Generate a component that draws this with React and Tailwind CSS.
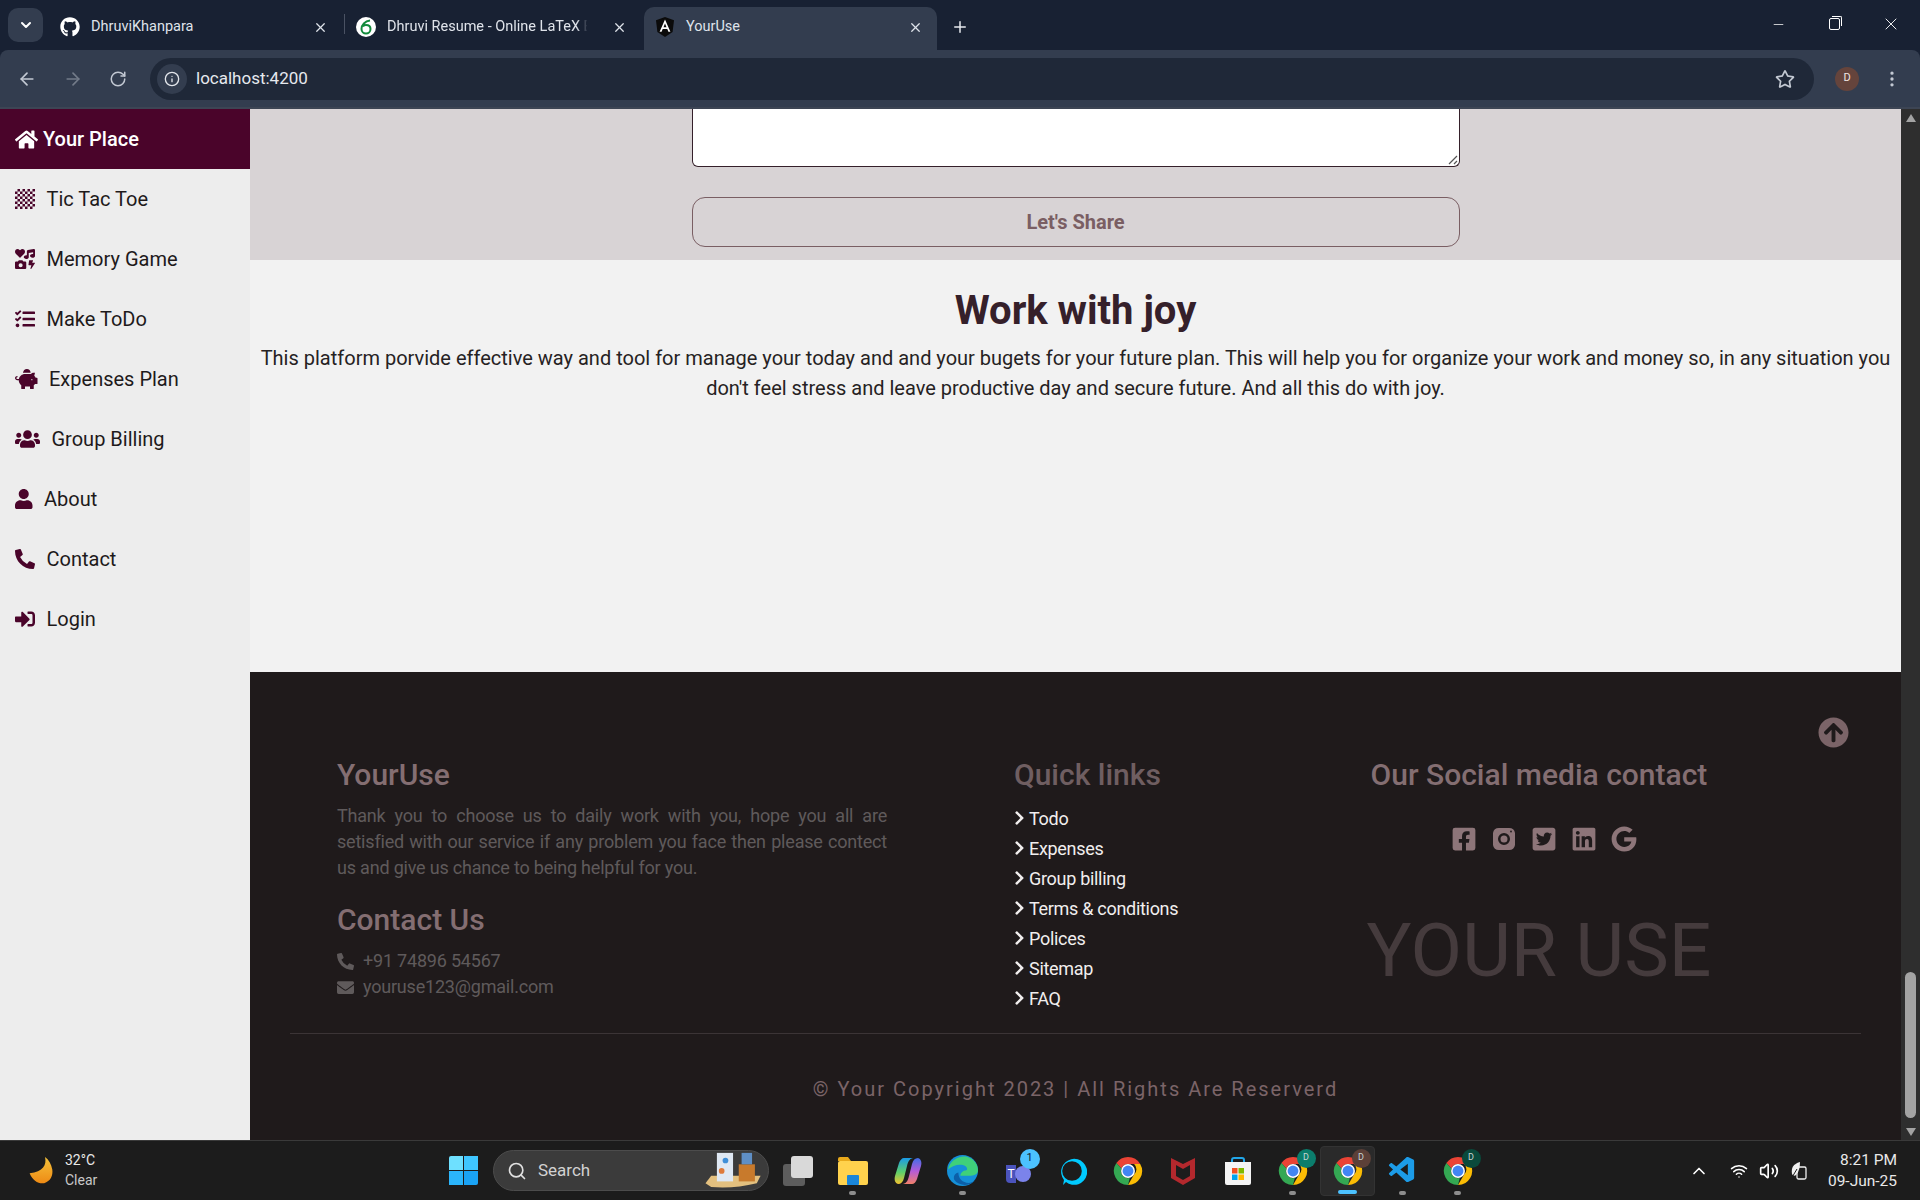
import React from 'react';
import {
  FaHome, FaChessBoard, FaIcons, FaTasks, FaPiggyBank, FaUsers, FaUser, FaPhoneAlt, FaSignInAlt,
  FaChevronRight, FaEnvelope, FaArrowCircleUp, FaFacebookSquare, FaTwitterSquare,
  FaLinkedin, FaGoogle, FaGithub, FaRegStar,
} from 'react-icons/fa';
import { VscVscode } from 'react-icons/vsc';
import { ArrowLeft, ArrowRight, RotateCw, Info, ChevronDown, X, Plus, Minus, EllipsisVertical, Search, ChevronUp, Wifi, Volume2 } from 'lucide-react';

const navItems = [
  { label: 'Tic Tac Toe', icon: FaChessBoard, size: 'w-[20px] h-[20px]' },
  { label: 'Memory Game', icon: FaIcons, size: 'w-[20px] h-[20px]' },
  { label: 'Make ToDo', icon: FaTasks, size: 'w-[20px] h-[20px]' },
  { label: 'Expenses Plan', icon: FaPiggyBank, size: 'w-[22.5px] h-[20px]' },
  { label: 'Group Billing', icon: FaUsers, size: 'w-[25px] h-[20px]' },
  { label: 'About', icon: FaUser, size: 'w-[17.5px] h-[20px]' },
  { label: 'Contact', icon: FaPhoneAlt, size: 'w-[20px] h-[20px]' },
  { label: 'Login', icon: FaSignInAlt, size: 'w-[20px] h-[20px]' },
];

const quickLinks = ['Todo', 'Expenses', 'Group billing', 'Terms & conditions', 'Polices', 'Sitemap', 'FAQ'];

const ChromeLogo = ({ badge, badgeClass }) => (
  <div className="relative w-[30px] h-[30px]">
    <svg viewBox="0 0 32 32" className="w-[30px] h-[30px]">
      <path d="M16 1a15 15 0 0 1 13 7.5H16a7.5 7.5 0 0 0-7 4.8L3.6 7.5A15 15 0 0 1 16 1z" fill="#ea4335" />
      <path d="M29 8.5A15 15 0 0 1 16 31l6.5-11.3a7.5 7.5 0 0 0 0-11.2z" fill="#fbbc04" />
      <path d="M3.6 7.5 9 13.3a7.5 7.5 0 0 0 9 10L16 31A15 15 0 0 1 3.6 7.5z" fill="#34a853" />
      <circle cx="16" cy="16" r="7.4" fill="#fff" />
      <circle cx="16" cy="16" r="5.8" fill="#4285f4" />
    </svg>
    {badge && (
      <div className={`absolute -top-[7px] -right-[8px] w-[19px] h-[19px] rounded-full flex items-center justify-center text-[9px] text-[#c9d5d2] ${badgeClass}`}>
        {badge}
      </div>
    )}
  </div>
);

const TaskbarSlot = ({ children, dot, active }) => (
  <div className={`relative w-[55px] h-[50px] flex items-center justify-center ${active ? 'bg-[#2a2a2a] rounded-[4px] border border-[#333333]' : ''}`}>
    {children}
    {dot && <div className="absolute bottom-[1px] w-[7px] h-[4px] rounded-full bg-[#8e8e8e]" />}
    {active && <div className="absolute bottom-[1px] w-[19px] h-[4px] rounded-full bg-[#4cc2ff]" />}
  </div>
);

const Tab = ({ icon, title, active, width, separator, fade }) => (
  <div className={`relative flex items-center h-[43px] pl-[11px] pb-[3px] ${width} ${active ? 'bg-[#333d4f] rounded-t-[10px] pr-[14px]' : 'pr-[17px]'}`}>
    <div className="w-[20px] h-[20px] flex items-center justify-center shrink-0">{icon}</div>
    <span className={`ml-[11px] text-[14.5px] text-[#dfe3ea] whitespace-nowrap flex-1 ${fade ? '[mask-image:linear-gradient(to_right,black_87%,transparent_92%)]' : ''}`}>{title}</span>
    <X size={15} className="text-[#dfe3ea] shrink-0 ml-[7px]" />
    {separator && <div className="absolute right-0 top-[7px] h-[20px] w-px bg-[#4a5263]" />}
  </div>
);

const BrowserChrome = () => (
  <div className="h-[109px] shrink-0 bg-[#182133] flex flex-col font-[Roboto,sans-serif]">
    <div className="h-[50px] flex items-end pl-[8px]">
      <div className="w-[35px] h-[34px] mb-[8px] rounded-[10px] bg-[#333d4f] flex items-center justify-center mr-[6px]">
        <ChevronDown size={16} className="text-white" strokeWidth={3} />
      </div>
      <Tab separator width="w-[296px]" title="DhruviKhanpara" icon={<FaGithub size={20} className="text-white" />} />
      <Tab
        fade
        width="w-[299px]"
        title="Dhruvi Resume - Online LaTeX E"
        icon={
          <svg viewBox="0 0 20 20" className="w-[20px] h-[20px]">
            <circle cx="10" cy="10" r="10" fill="#fff" />
            <path d="M14 3.5C9 4 5.500 8 5.500 12a4.500 4.500 0 0 0 9 0c0-2.500-2-4-4.500-4-1.500 0-2.500.5-3 1.500" fill="none" stroke="#138a3c" strokeWidth="2" />
          </svg>
        }
      />
      <Tab
        active
        width="w-[293px]"
        title="YourUse"
        icon={
          <svg viewBox="0 0 20 20" className="w-[20px] h-[20px]">
            <path d="M10 0 1 3.200 2.400 15 10 20l7.600-5L19 3.200z" fill="#0b0b0b" />
            <path d="M10 2.500 4.600 14.700h2l1.100-2.700h4.600l1.100 2.700h2zM8.500 10.200 10 6.500l1.500 3.700z" fill="#fff" />
          </svg>
        }
      />
      <div className="w-[46px] h-[43px] pb-[3px] flex items-center justify-center">
        <Plus size={18} className="text-[#e6e9ee]" />
      </div>
      <div className="flex-1" />
      <div className="h-[50px] flex items-center pb-[2px]">
        <div className="w-[56px] flex justify-center"><Minus size={15} className="text-white" strokeWidth={1.2} /></div>
        <div className="w-[56px] flex justify-center">
          <div className="relative w-[11px] h-[12px] border border-white rounded-[2px]">
            <div className="absolute -top-[3px] -right-[3px] w-[10px] h-[10px] border-t border-r border-white rounded-tr-[2px]" />
          </div>
        </div>
        <div className="w-[58px] flex justify-center"><X size={20} className="text-white" strokeWidth={1.1} /></div>
      </div>
    </div>
    <div className="h-[59px] bg-[#333d4f] rounded-t-[8px] border-b-2 border-[#3d4554] flex items-center">
      <div className="w-[150px] flex items-center pl-[17px] gap-[26px]">
        <ArrowLeft size={20} className="text-[#c3c9d3]" />
        <ArrowRight size={20} className="text-[#737b89]" />
        <RotateCw size={18} className="text-[#c3c9d3]" />
      </div>
      <div className="w-[1664px] h-[42px] rounded-full bg-[#1f2838] flex items-center pl-[7px] pr-[19px]">
        <div className="w-[30px] h-[30px] rounded-full bg-[#333d4f] flex items-center justify-center">
          <Info size={16} className="text-[#e3e6eb]" />
        </div>
        <span className="ml-[9px] text-[17px] text-[#e6e9ee] flex-1">localhost:4200</span>
        <FaRegStar size={20} className="text-[#c3c9d3]" />
      </div>
      <div className="flex items-center ml-[21px]">
        <div className="w-[24px] h-[24px] rounded-full bg-[#65443c] flex items-center justify-center text-[11px] text-[#f1e6e3]">D</div>
        <EllipsisVertical size={20} className="ml-[23px] text-[#c3c9d3]" />
      </div>
    </div>
  </div>
);

const Sidebar = () => (
  <aside className="w-[250px] shrink-0 bg-[#ededed] font-[Roboto,sans-serif]">
    <div className="h-[60px] bg-[#4a042a] flex items-center pl-[15px] gap-[5px] text-white text-[20px] font-medium">
      <FaHome size={23} />
      <span>Your Place</span>
    </div>
    {navItems.map((item) => (
      <div key={item.label} className="h-[60px] flex items-center pl-[15px] gap-[11.5px] text-[20px] text-[#1e1a1b]">
        <item.icon className={`${item.size} text-[#4a042a]`} />
        <span>{item.label}</span>
      </div>
    ))}
  </aside>
);

const Footer = () => (
  <footer className="relative flex-1 bg-[#1f1a1b] px-[40px] font-[Roboto,sans-serif]">
    <FaArrowCircleUp size={31} className="absolute top-[45px] right-[52px] text-[#7b6468]" />
    <div className="h-[362px] flex pl-[47px] pt-[83px] border-b border-[#3b3436]">
      <div className="w-[677px]">
        <h3 className="text-[30px] leading-[40px] font-medium text-[#846e72]">YourUse</h3>
        <p className="w-[550px] mt-[8px] text-[18px] leading-[26px] tracking-[-0.2px] text-[#5f5a5b] text-justify">
          Thank you to choose us to daily work with you, hope you all are setisfied with our service if any problem you face then please contect us and give us chance to being helpful for you.
        </p>
        <h3 className="mt-[19px] text-[30px] leading-[40px] font-medium text-[#846e72]">Contact Us</h3>
        <div className="mt-[8px] flex flex-col text-[18px] leading-[26px] tracking-[-0.2px] text-[#5f5a5b]">
          <div className="flex items-center gap-[9px]"><FaPhoneAlt size={17} /><span>+91 74896 54567</span></div>
          <div className="flex items-center gap-[9px]"><FaEnvelope size={17} /><span>youruse123@gmail.com</span></div>
        </div>
      </div>
      <div className="w-[333px]">
        <h3 className="text-[30px] leading-[40px] font-medium text-[#6f5e61]">Quick links</h3>
        <ul className="mt-[8px] flex flex-col">
          {quickLinks.map((link) => (
            <li key={link} className="h-[30px] flex items-center gap-[4px] text-[18px] tracking-[-0.3px] text-[#f1eeee]">
              <FaChevronRight className="w-[11px] h-[16px]" />
              <span>{link}</span>
            </li>
          ))}
        </ul>
      </div>
      <div className="w-[384px] flex flex-col items-center">
        <h3 className="text-[30px] leading-[40px] font-medium text-[#846e72] whitespace-nowrap">Our Social media contact</h3>
        <div className="mt-[31px] ml-[10px] flex items-center gap-[14px] text-[#8d7579]">
          <FaFacebookSquare size={26} />
          <svg viewBox="0 0 26 26" className="w-[26px] h-[26px]">
            <path fillRule="evenodd" fill="currentColor" d="M8 2h10a6 6 0 0 1 6 5v12a6 6 0 0 1-6 5H8a6 6 0 0 1-6-5V7a6 6 0 0 1 6-5zm5 5a6 6 0 1 0 0 12 6 6 0 0 0 0-12zm0 2.500a3.500 3.500 0 1 1 0 7 3.500 3.500 0 0 1 0-7z" />
            <circle cx="20" cy="5.500" r="0.900" fill="#1f1a1b" />
          </svg>
          <FaTwitterSquare size={26} />
          <FaLinkedin size={26} />
          <FaGoogle size={26} />
        </div>
        <div className="mt-[56px] text-[75px] leading-[84px] text-[#453b3d] whitespace-nowrap">YOUR USE</div>
      </div>
    </div>
    <p className="pt-[43px] text-center text-[20px] leading-[24px] tracking-[2px] text-[#7b6468]">
      © Your Copyright 2023 | All Rights Are Reserverd
    </p>
  </footer>
);

const Main = () => (
  <main className="flex-1 flex flex-col font-[Roboto,sans-serif]">
    <section className="h-[151px] bg-[#d8d3d5] shrink-0 flex flex-col items-center">
      <div className="relative w-[768px] h-[58px] bg-white border border-t-0 border-[#35202a] rounded-b-[6px]">
        <svg viewBox="0 0 10 10" className="absolute right-[1px] bottom-[1px] w-[10px] h-[10px]">
          <path d="M1 9 9 1M6 9l3-3" stroke="#555" strokeWidth="1.200" fill="none" />
        </svg>
      </div>
      <div className="mt-[30px] w-[768px] h-[50px] border border-[#7a5e63] rounded-[13px] flex items-center justify-center text-[20px] font-bold text-[#7a5e63]">
        Let's Share
      </div>
    </section>
    <section className="h-[412px] bg-[#f2f2f2] shrink-0 px-[10px] pt-[26px] text-center">
      <h2 className="text-[40px] leading-[50px] font-bold text-[#35202a]">Work with joy</h2>
      <p className="mt-[7px] text-[20px] leading-[30px] text-[#262223]">
        This platform porvide effective way and tool for manage your today and and your bugets for your future plan. This will help you for organize your work and money so, in any situation you don't feel stress and leave productive day and secure future. And all this do with joy.
      </p>
    </section>
    <Footer />
  </main>
);

const Scrollbar = () => (
  <div className="w-[19px] shrink-0 bg-[#2e2e2e] flex flex-col items-center">
    <div className="h-[17px] flex items-center justify-center">
      <div className="w-0 h-0 border-x-[5px] border-x-transparent border-b-[8px] border-b-[#a3a3a3]" />
    </div>
    <div className="flex-1 w-full flex flex-col justify-end items-center pb-[5px]">
      <div className="w-[11px] h-[146px] rounded-full bg-[#a3a3a3]" />
    </div>
    <div className="h-[17px] flex items-center justify-center">
      <div className="w-0 h-0 border-x-[5px] border-x-transparent border-t-[8px] border-t-[#a3a3a3]" />
    </div>
  </div>
);

const Taskbar = () => (
  <div className="h-[60px] shrink-0 bg-[#1c1c1c] border-t border-[#3a3a3a] flex items-center font-[Roboto,sans-serif]">
    {/* weather */}
    <div className="w-[433px] flex items-center pl-[26px]">
      <svg viewBox="0 0 30 32" className="w-[29px] h-[29px]">
        <defs>
          <linearGradient id="moon" x1="0" y1="0" x2="0" y2="1">
            <stop offset="0" stopColor="#f5c33b" />
            <stop offset="1" stopColor="#ee8a14" />
          </linearGradient>
        </defs>
        <path d="M20 1c2 9-2 16-17 18 3 8 10 12 16 11 7-2 10-8 9-15C27 9 24 4 20 1z" fill="url(#moon)" />
      </svg>
      <div className="ml-[10px] text-[14px] leading-[20px] text-[#e8e8e8] -mt-[1px]">
        <div>32°C</div>
        <div className="text-[#c8c8c8]">Clear</div>
      </div>
    </div>
    {/* start */}
    <div className="w-[60px] flex justify-center">
      <div className="grid grid-cols-2 gap-[1px] w-[29px] h-[29px]">
        <div className="bg-[#6ee0ff] rounded-tl-[2px]" />
        <div className="bg-[#3fc6ff]" />
        <div className="bg-[#2bb5fb]" />
        <div className="bg-[#1aa3f5] rounded-br-[2px]" />
      </div>
    </div>
    {/* search */}
    <div className="w-[276px] h-[41px] rounded-full bg-[#3b3b3b] border border-[#4c4c4c] flex items-center pl-[13px] relative">
      <Search size={20} className="text-[#e0e0e0]" />
      <span className="ml-[11px] text-[17px] text-[#d2d2d2]">Search</span>
      <svg viewBox="0 0 60 40" className="absolute right-[4px] bottom-[1px] w-[60px] h-[38px]">
        <path d="M0 34 6 26H58L54 34Q30 40 6 38z" fill="#e3c07f" />
        <rect x="12" y="2" width="17" height="30" fill="#dfe8f3" />
        <circle cx="21" cy="10" r="3" fill="#3f8fd8" />
        <circle cx="17" cy="21" r="3" fill="#de7a3a" />
        <rect x="35" y="14" width="17" height="18" fill="#c87a2c" />
        <rect x="38" y="2" width="11" height="12" fill="#5f8fc5" />
      </svg>
    </div>
    <div className="flex items-center ml-[1px]">
      <TaskbarSlot>
        <div className="relative w-[30px] h-[30px]">
          <div className="absolute left-0 bottom-0 w-[22px] h-[22px] bg-[#5d5d5d] rounded-[3px]" />
          <div className="absolute right-0 top-0 w-[22px] h-[22px] bg-[#d9d9d9] rounded-[3px]" />
        </div>
      </TaskbarSlot>
      <TaskbarSlot dot>
        <svg viewBox="0 0 30 30" className="w-[30px] h-[30px]">
          <path d="M0 3a2 2 0 0 1 2-2h8l3 4H0z" fill="#e8a91b" />
          <rect y="5" width="30" height="24" rx="2" fill="#ffd24d" />
          <rect x="9" y="19" width="12" height="10" rx="1" fill="#1a86d9" />
        </svg>
      </TaskbarSlot>
      <TaskbarSlot>
        <svg viewBox="0 0 30 30" className="w-[30px] h-[30px]">
          <defs>
            <linearGradient id="copA" x1="0.5" y1="0" x2="0.5" y2="1">
              <stop offset="0" stopColor="#1a9be8" />
              <stop offset="0.55" stopColor="#5fd06a" />
              <stop offset="1" stopColor="#f2c230" />
            </linearGradient>
            <linearGradient id="copB" x1="0.5" y1="0" x2="0.5" y2="1">
              <stop offset="0" stopColor="#3f6fe8" />
              <stop offset="0.5" stopColor="#b45ad8" />
              <stop offset="1" stopColor="#f0806a" />
            </linearGradient>
          </defs>
          <path d="M11 2h9c-4 1-5 4-6 8l-3 12c-1 4-3 6-6 6-3-1-4-4-3-8L6 7c1-3 3-5 5-5z" fill="url(#copA)" />
          <path d="M19 28h-9c4-1 5-4 6-8l3-12c1-4 3-6 6-6 3 1 4 4 3 8l-4 13c-1 3-3 5-5 5z" fill="url(#copB)" />
        </svg>
      </TaskbarSlot>
      <TaskbarSlot dot>
        <svg viewBox="0 0 30 30" className="w-[31px] h-[31px]">
          <circle cx="15" cy="15" r="15" fill="#1590d8" />
          <path d="M1 14C3 5 12 0 20 2c6 2 10 7 10 13 0 3-3 5-7 5H13c0-3 3-5 5-5 2 0 2-2 0-4-5-3-12-1-17 3z" fill="#3fd07a" />
          <path d="M11 17c0 6 4 10 10 10 2 0 4-1 6-2-6 6-16 5-20-1-1-3 0-6 4-7z" fill="#0c5fa8" />
        </svg>
      </TaskbarSlot>
      <TaskbarSlot>
        <div className="relative">
          <svg viewBox="0 0 30 30" className="w-[30px] h-[30px]">
            <path d="M3 9h10v18H7a4 4 0 0 1-4-4z" fill="#4b53bc" />
            <circle cx="20" cy="18" r="8" fill="#7b83eb" />
            <text x="4.500" y="22" fontSize="12" fill="#fff" fontFamily="Roboto">T</text>
          </svg>
          <div className="absolute -top-[7px] -right-[7px] w-[20px] h-[20px] rounded-full bg-[#4cc2ff] flex items-center justify-center text-[11px] text-[#102030]">1</div>
        </div>
      </TaskbarSlot>
      <TaskbarSlot>
        <svg viewBox="0 0 30 30" className="w-[30px] h-[30px] -ml-[2px]">
          <path d="M9 26 6 29l1-5A13 13 0 1 1 9 26z" fill="#00caff" />
          <circle cx="15" cy="15" r="9.800" fill="#1c1c1c" />
        </svg>
      </TaskbarSlot>
      <TaskbarSlot><ChromeLogo /></TaskbarSlot>
      <TaskbarSlot>
        <svg viewBox="0 0 30 30" className="w-[30px] h-[30px]">
          <path d="M3 2 15 8l12-6v20l-12 7-12-7zM8 9v11l7 4 7-4V9l-7 4z" fill="#b3282d" fillRule="evenodd" />
        </svg>
      </TaskbarSlot>
      <TaskbarSlot>
        <svg viewBox="0 0 30 30" className="w-[30px] h-[30px]">
          <path d="M9 7V4a2 2 0 0 1 2-2h8a2 2 0 0 1 2 2v3" fill="none" stroke="#21a6e8" strokeWidth="2" />
          <path d="M2 6h26v21a2 2 0 0 1-2 2H4a2 2 0 0 1-2-2z" fill="#f4f4f4" />
          <rect x="9" y="12" width="5.500" height="5.500" fill="#f25022" />
          <rect x="15.500" y="12" width="5.500" height="5.500" fill="#7fba00" />
          <rect x="9" y="18.500" width="5.500" height="5.500" fill="#00a4ef" />
          <rect x="15.500" y="18.500" width="5.500" height="5.500" fill="#ffb900" />
        </svg>
      </TaskbarSlot>
      <TaskbarSlot dot><ChromeLogo badge="D" badgeClass="bg-[#0b7d6c]" /></TaskbarSlot>
      <TaskbarSlot active><ChromeLogo badge="D" badgeClass="bg-[#5c4038]" /></TaskbarSlot>
      <TaskbarSlot dot><VscVscode size={31} className="text-[#1c9ce8]" /></TaskbarSlot>
      <TaskbarSlot dot><ChromeLogo badge="D" badgeClass="bg-[#0a4a3c]" /></TaskbarSlot>
    </div>
    <div className="flex-1" />
    {/* tray */}
    <div className="flex items-center text-white">
      <ChevronUp size={20} className="mr-[21px]" />
      <Wifi size={18} className="mr-[11px]" />
      <Volume2 size={20} className="mr-[10px]" />
      <svg viewBox="0 0 20 20" className="w-[20px] h-[20px] mr-[19px]">
        <rect x="8" y="6" width="9" height="12" rx="1.500" fill="none" stroke="#f0f0f0" strokeWidth="1.300" />
        <path d="M11 1C4 3 2 7 3 13c1 2 3 2 4 1 3-3 4-8 4-13z" fill="#f0f0f0" />
        <path d="M2 18 8 8" stroke="#1c1c1c" strokeWidth="1" />
      </svg>
      <div className="text-right text-[15.5px] leading-[21px] text-[#e8e8e8] pr-[23px]">
        <div>8:21 PM</div>
        <div>09-Jun-25</div>
      </div>
    </div>
  </div>
);

const App = () => {
  return (
    <div className="w-[1920px] h-[1200px] flex flex-col overflow-hidden">
      <BrowserChrome />
      <div className="flex-1 flex min-h-0">
        <Sidebar />
        <Main />
        <Scrollbar />
      </div>
      <Taskbar />
    </div>
  );
};

export default App;
